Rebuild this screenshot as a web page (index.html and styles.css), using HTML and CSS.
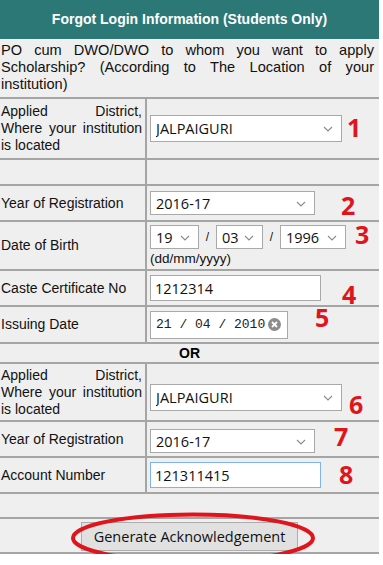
FILE: index.html
```html
<!DOCTYPE html>
<html lang="en">
<head>
    <meta charset="UTF-8">
    <title>Forgot Login Information</title>
    <link rel="stylesheet" href="styles.css">
</head>
<body>

<div class="page">
    <div class="head">Forgot Login Information (Students Only)</div>

    <div class="intro">PO cum DWO/DWO to whom you want to apply Scholarship? (According to The Location of your institution)</div>

    <!-- Search by caste certificate -->
    <div class="row r-district">
        <div class="lbl">Applied District, Where your institution is located</div>
        <div class="val">
            <span class="sel w-district">
                <select><option>JALPAIGURI</option></select>
                <svg class="chev" width="10" height="6" viewBox="0 0 10 6"><path d="M1 1l4 4 4-4" fill="none" stroke="#8a8a8a" stroke-width="1.1"/></svg>
            </span>
        </div>
    </div>
    <div class="row r-empty">
        <div class="lbl"></div>
        <div class="val"></div>
    </div>
    <div class="row r-year">
        <div class="lbl">Year of Registration</div>
        <div class="val">
            <span class="sel w-year">
                <select><option>2016-17</option></select>
                <svg class="chev" width="10" height="6" viewBox="0 0 10 6"><path d="M1 1l4 4 4-4" fill="none" stroke="#8a8a8a" stroke-width="1.1"/></svg>
            </span>
        </div>
    </div>
    <div class="row r-dob">
        <div class="lbl">Date of Birth</div>
        <div class="val dob">
            <div class="dob-line">
                <span class="sel w-dd">
                    <select><option>19</option></select>
                    <svg class="chev" width="10" height="6" viewBox="0 0 10 6"><path d="M1 1l4 4 4-4" fill="none" stroke="#8a8a8a" stroke-width="1.1"/></svg>
                </span>
                <span class="slash">/</span>
                <span class="sel w-mm">
                    <select><option>03</option></select>
                    <svg class="chev" width="10" height="6" viewBox="0 0 10 6"><path d="M1 1l4 4 4-4" fill="none" stroke="#8a8a8a" stroke-width="1.1"/></svg>
                </span>
                <span class="slash">/</span>
                <span class="sel w-yy">
                    <select><option>1996</option></select>
                    <svg class="chev" width="10" height="6" viewBox="0 0 10 6"><path d="M1 1l4 4 4-4" fill="none" stroke="#8a8a8a" stroke-width="1.1"/></svg>
                </span>
            </div>
            <div class="hint">(dd/mm/yyyy)</div>
        </div>
    </div>
    <div class="row r-caste">
        <div class="lbl">Caste Certificate No</div>
        <div class="val"><input class="txt w-caste" type="text" value="1212314"></div>
    </div>
    <div class="row r-issue">
        <div class="lbl">Issuing Date</div>
        <div class="val">
            <span class="date">
                <span class="date-txt">21 / 04 / 2010</span>
                <svg width="13" height="13" viewBox="0 0 13 13"><circle cx="6.5" cy="6.5" r="6.5" fill="#8c8c8c"/><path d="M4 4l5 5M9 4l-5 5" stroke="#fff" stroke-width="1.8"/></svg>
            </span>
        </div>
    </div>

    <div class="row r-or">OR</div>

    <!-- Search by account number -->
    <div class="row r-district2">
        <div class="lbl">Applied District, Where your institution is located</div>
        <div class="val">
            <span class="sel w-district low">
                <select><option>JALPAIGURI</option></select>
                <svg class="chev" width="10" height="6" viewBox="0 0 10 6"><path d="M1 1l4 4 4-4" fill="none" stroke="#8a8a8a" stroke-width="1.1"/></svg>
            </span>
        </div>
    </div>
    <div class="row r-year2">
        <div class="lbl">Year of Registration</div>
        <div class="val">
            <span class="sel w-year low2">
                <select><option>2016-17</option></select>
                <svg class="chev" width="10" height="6" viewBox="0 0 10 6"><path d="M1 1l4 4 4-4" fill="none" stroke="#8a8a8a" stroke-width="1.1"/></svg>
            </span>
        </div>
    </div>
    <div class="row r-acc">
        <div class="lbl">Account Number</div>
        <div class="val"><input class="txt w-caste focus" type="text" value="121311415"></div>
    </div>
    <div class="row r-empty2"></div>
    <div class="row r-btn">
        <button class="btn">Generate Acknowledgement</button>
    </div>

    <!-- Annotations -->
    <span class="num n1">1</span>
    <span class="num n2">2</span>
    <span class="num n3">3</span>
    <span class="num n4">4</span>
    <span class="num n5">5</span>
    <span class="num n6">6</span>
    <span class="num n7">7</span>
    <span class="num n8">8</span>
    <svg class="ring" width="246" height="52" viewBox="0 0 246 52"><ellipse cx="123" cy="26" rx="120" ry="23.5" fill="none" stroke="#e0141c" stroke-width="4"/></svg>
</div>

</body>
</html>
```

FILE: styles.css
```css
body {
    margin: 0;
    background: #fff;
    font-family: "Liberation Sans", Arial, sans-serif;
    font-size: 14px;
    color: #111;
}

.page {
    position: relative;
    width: 379px;
}

/* Header */
.head {
    height: 39px;
    line-height: 39px;
    background: #2b7876;
    color: #fff;
    font-weight: bold;
    text-align: center;
}

.intro {
    box-sizing: border-box;
    height: 58px;
    padding: 3px 5px 0 1px;
    background: #efefef;
    font-size: 14.6px;
    line-height: 17px;
    text-align: justify;
}

/* Rows */
.row {
    box-sizing: border-box;
    display: flex;
    background: #efefef;
    border-top: 2px solid #a5a5a5;
}

.lbl {
    box-sizing: border-box;
    width: 147px;
    flex-shrink: 0;
    display: flex;
    align-items: center;
    padding: 0 3px 0 1px;
    border-right: 2px solid #a5a5a5;
    line-height: 17px;
    text-align: justify;
}

.val {
    flex: 1;
    display: flex;
    align-items: center;
    padding-left: 3px;
}

.r-district  { height: 61px; }
.r-empty     { height: 26px; }
.r-year      { height: 36px; }
.r-dob       { height: 49px; }
.r-caste     { height: 36px; }
.r-issue     { height: 37px; }
.r-district2 { height: 58px; }
.r-year2     { height: 36px; }
.r-acc       { height: 36px; }
.r-empty2    { height: 25px; }

.r-or {
    height: 20px;
    justify-content: center;
    align-items: center;
    font-weight: bold;
    font-size: 14px;
    color: #000;
}

.r-btn {
    height: 37px;
    justify-content: center;
    align-items: center;
    border-bottom: 2px solid #a5a5a5;
}

/* Selects */
.sel {
    position: relative;
    display: inline-block;
}

.sel select {
    box-sizing: border-box;
    width: 100%;
    height: 24px;
    margin: 0;
    padding: 0 0 0 5px;
    appearance: none;
    -webkit-appearance: none;
    background: #fff;
    border: 1px solid #a9a9a9;
    border-radius: 0;
    font-family: "Open Sans", sans-serif;
    font-size: 14.5px;
    color: #111;
}

.chev {
    position: absolute;
    right: 9px;
    top: 10px;
}

.w-district { width: 192px; }
.w-district select { height: 27px; }
.w-district .chev { top: 11px; }
.w-year { width: 165px; }
.w-dd { width: 49px; }
.w-mm { width: 47px; }
.w-yy { width: 66px; }

.low { margin-top: 10px; }
.low2 { margin-top: 4px; }

/* Date of birth */
.dob {
    flex-direction: column;
    align-items: flex-start;
    padding-top: 3px;
}

.dob-line {
    display: flex;
    align-items: center;
}

.slash {
    width: 17px;
    text-align: center;
    font-size: 12px;
}

.hint {
    font-size: 13.5px;
    line-height: 15px;
    margin-top: 2px;
}

/* Text inputs */
.txt {
    box-sizing: border-box;
    height: 26px;
    margin: 0;
    padding: 0 4px;
    background: #fff;
    border: 1px solid #a9a9a9;
    font-family: "Open Sans", sans-serif;
    font-size: 14.5px;
    color: #111;
}

.w-caste { width: 171px; }

.txt.focus {
    border-color: #7eb4ea;
}

.date {
    box-sizing: border-box;
    display: flex;
    align-items: center;
    gap: 3px;
    width: 138px;
    height: 28px;
    padding: 0 5px;
    background: #fff;
    border: 1px solid #a9a9a9;
}

.date-txt {
    font-family: "Liberation Mono", monospace;
    font-size: 13px;
    color: #222;
}

/* Button */
.btn {
    box-sizing: border-box;
    width: 217px;
    height: 29px;
    margin-top: 1px;
    background: #e1e1e1;
    border: 1px solid #adadad;
    font-family: "Open Sans", sans-serif;
    font-size: 14.5px;
    color: #111;
}

/* Red annotations */
.num {
    position: absolute;
    font-family: "Open Sans", sans-serif;
    font-weight: bold;
    font-size: 25px;
    line-height: 1;
    color: #e0141c;
}

.n1 { left: 347px; top: 115px; }
.n2 { left: 341px; top: 193px; }
.n3 { left: 355px; top: 222px; }
.n4 { left: 342px; top: 282px; }
.n5 { left: 315px; top: 305px; }
.n6 { left: 349px; top: 392px; }
.n7 { left: 334px; top: 424px; }
.n8 { left: 339px; top: 462px; }

.ring {
    position: absolute;
    left: 70px;
    top: 512px;
}
```
